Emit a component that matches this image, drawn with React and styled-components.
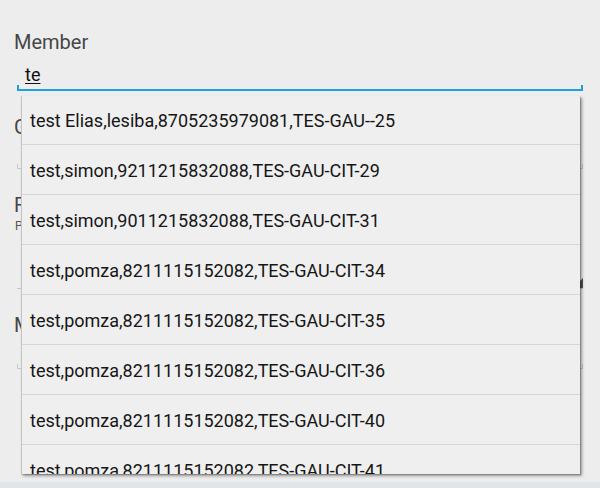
import React from "react";
import styled, { createGlobalStyle } from "styled-components";

const Global = createGlobalStyle`
  html, body { margin: 0; padding: 0; background: #ededed; }
  body { font-family: Roboto, "Noto Sans", sans-serif; }
  * { box-sizing: border-box; }
`;

const Page = styled.div`
  position: relative;
  width: 600px;
  height: 488px;
  overflow: hidden;
  background: #ededed;
  display: flex;
  flex-direction: column;
`;

const Form = styled.div`
  flex: 1;
  display: flex;
  flex-direction: column;
  padding: 30px 17px 0 14px;
`;

const Label = styled.div`
  font-size: 20px;
  line-height: 24px;
  color: #464646;
  margin-top: ${(p) => p.$top || 0}px;
`;

const Hint = styled.div`
  font-size: 12px;
  line-height: 14px;
  color: #555;
  margin: 2px 0 0 1px;
`;

const Field = styled.div`
  position: relative;
  margin: ${(p) => p.$top || 0}px 0 0 3px;
  padding: 0 0 3px 8px;
  height: ${(p) => p.$h || 25}px;
  border-bottom: ${(p) => (p.$active ? "2px solid #1f9fdb" : "1px solid #c8c8c8")};
  font-size: 18px;
  line-height: 22px;
  color: #111;
  &::before, &::after {
    content: "";
    position: absolute;
    bottom: 0;
    width: ${(p) => (p.$active ? 2 : 1)}px;
    height: 4px;
    background: ${(p) => (p.$active ? "#1f9fdb" : "#c8c8c8")};
  }
  &::before { left: 0; }
  &::after { right: 0; }
`;

const Typed = styled.span`
  text-decoration: underline;
  text-underline-offset: 2px;
`;

const Spinner = styled.div`
  position: relative;
  margin: ${(p) => p.$top || 0}px 0 0 3px;
  height: 40px;
  border-bottom: 1px solid #c8c8c8;
  &::after {
    content: "";
    position: absolute;
    right: 0;
    bottom: 0;
    width: 0;
    height: 0;
    border-left: 10px solid transparent;
    border-bottom: 10px solid #555;
  }
`;

const BottomBar = styled.div`
  height: 6px;
  background: #e2e5e8;
`;

const Dropdown = styled.ul`
  position: absolute;
  left: 21px;
  top: 96px;
  width: 559px;
  height: 378px;
  margin: 0;
  padding: 0;
  list-style: none;
  overflow: hidden;
  background: #efefef;
  border-left: 1px solid #c4c4c4;
  box-shadow: 2px 2px 3px rgba(0, 0, 0, 0.35), 1px 1px 1px rgba(0, 0, 0, 0.2);
`;

const Item = styled.li`
  height: 50px;
  flex-shrink: 0;
  display: flex;
  align-items: center;
  padding: 1px 0 0 8px;
  border-bottom: 1px solid #d6d6d6;
  font-size: 18px;
  color: #161616;
  white-space: nowrap;
  &:first-child { height: 49px; }
`;

const items = [
  "test Elias,lesiba,8705235979081,TES-GAU--25",
  "test,simon,9211215832088,TES-GAU-CIT-29",
  "test,simon,9011215832088,TES-GAU-CIT-31",
  "test,pomza,8211115152082,TES-GAU-CIT-34",
  "test,pomza,8211115152082,TES-GAU-CIT-35",
  "test,pomza,8211115152082,TES-GAU-CIT-36",
  "test,pomza,8211115152082,TES-GAU-CIT-40",
  "test,pomza,8211115152082,TES-GAU-CIT-41",
];

export default function App() {
  return (
    <Page>
      <Global />
      <Form>
        <Label>Member</Label>
        <Field $active $top={10} $h={27}>
          <Typed>te</Typed>
        </Field>
        <Label $top={24}>Group</Label>
        <Field $top={6} $h={24} />
        <Label $top={24}>Facility</Label>
        <Hint>Please select a facility</Hint>
        <Spinner $top={16} />
        <Label $top={24}>Member type</Label>
        <Field $top={10} $h={22} />
      </Form>
      <BottomBar />
      <Dropdown>
        {items.map((t, i) => (
          <Item key={i}>{t}</Item>
        ))}
      </Dropdown>
    </Page>
  );
}
